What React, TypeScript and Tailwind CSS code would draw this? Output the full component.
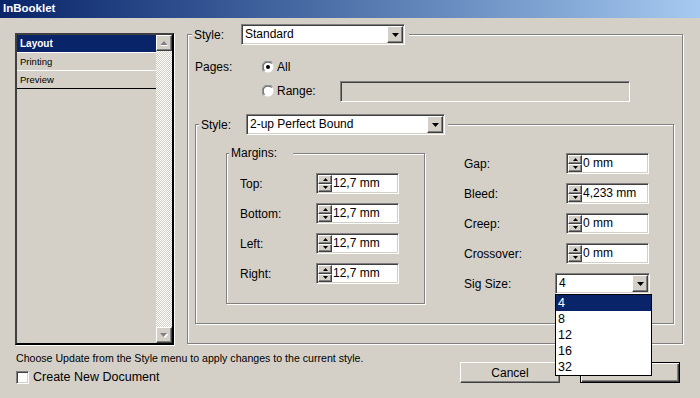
import React from "react";

const raised =
  "border border-t-white border-l-white border-r-[#404040] border-b-[#404040] shadow-[inset_-1px_-1px_0_#808080]";
const sunken =
  "border border-t-[#808080] border-l-[#808080] border-r-white border-b-white shadow-[inset_1px_1px_0_#404040,inset_-1px_-1px_0_#d4d0c8] p-px";
const etched = "border border-[#808080] shadow-[inset_1px_1px_0_#fff,1px_1px_0_#fff]";

function Tri({ up, color = "#000" }: { up?: boolean; color?: string }) {
  return (
    <svg width="5" height="3" viewBox="0 0 5 3">
      <path d={up ? "M2.5 0L5 3H0z" : "M0 0h5L2.5 3z"} fill={color} />
    </svg>
  );
}

function DropBtn() {
  return (
    <div className={`flex w-[16px] items-center justify-center bg-[#d4d0c8] ${raised}`}>
      <svg width="7" height="4" viewBox="0 0 7 4">
        <path d="M0 0h7L3.5 4z" fill="#000" />
      </svg>
    </div>
  );
}

function Select({ value, className }: { value: string; className: string }) {
  return (
    <div className={`flex h-[21px] bg-white ${sunken} ${className}`}>
      <div className="flex-1 pl-[2px] text-[12px] leading-[17px]">{value}</div>
      <DropBtn />
    </div>
  );
}

function Spin({ value }: { value: string }) {
  return (
    <div className={`flex h-[21px] w-[83px] ${sunken}`}>
      <div className="flex w-[14px] flex-col">
        <div className={`flex flex-1 items-center justify-center bg-[#d4d0c8] ${raised}`}>
          <Tri up />
        </div>
        <div className={`flex flex-1 items-center justify-center bg-[#d4d0c8] ${raised}`}>
          <Tri />
        </div>
      </div>
      <div className="flex-1 bg-white pl-px text-[12px] leading-[17px]">{value}</div>
    </div>
  );
}

function Radio({ checked }: { checked?: boolean }) {
  return (
    <svg width="12" height="12" viewBox="0 0 12 12">
      <circle cx="6" cy="6" r="5.5" fill="#fff" />
      <path d="M1.6 10.4A5.5 5.5 0 0 1 10.4 1.6" fill="none" stroke="#808080" />
      <path d="M2.5 9.5A4.5 4.5 0 0 1 9.5 2.5" fill="none" stroke="#404040" />
      {checked && <circle cx="6" cy="6" r="2" fill="#000" />}
    </svg>
  );
}

function ScrollArrow({ up }: { up?: boolean }) {
  return (
    <div className={`flex h-[16px] w-[16px] items-center justify-center bg-[#d4d0c8] ${raised}`}>
      <svg width="8" height="5" viewBox="0 0 8 5">
        <path d={up ? "M4.5 1L8.5 5H0.5z" : "M1 1h8L5 5z"} fill="#fff" />
        <path d={up ? "M4 0L7.5 4H0.5z" : "M0 0h7L3.5 4z"} fill="#808080" />
      </svg>
    </div>
  );
}

function Row({ label, children, labelW }: { label: string; children: React.ReactNode; labelW: string }) {
  return (
    <div className="flex h-[21px] items-center">
      <div className={`${labelW} text-[12px]`}>{label}</div>
      {children}
    </div>
  );
}

export default function App() {
  return (
    <div className="relative h-[398px] w-[700px] overflow-hidden bg-[#d4d0c8] font-['Liberation_Sans',Arial,sans-serif] text-black">
      <div className="h-[18px] bg-linear-to-r from-[#0a246a] to-[#a6caf0] pl-[3px] text-[11.5px] font-bold leading-[17px] text-white">
        InBooklet
      </div>

      <div className="flex items-start pl-[15px] pt-[6px]">
        {/* left list */}
        <div className="mt-[9px] flex h-[312px] w-[159px] border-2 border-t-[#404040] border-l-[#404040] border-r-black border-b-black shadow-[1px_1px_0_#fff]">
          <div className="flex-1">
            <div className="h-[18px] border-b border-white bg-[#0a246a] pl-[3px] text-[10px] font-bold leading-[18px] text-white">
              Layout
            </div>
            <div className="h-[18px] border-b border-white pl-[3px] text-[9.5px] leading-[18px]">Printing</div>
            <div className="h-[18px] border-b border-black pl-[3px] text-[9.5px] leading-[18px]">Preview</div>
          </div>
          <div className="flex w-[16px] flex-col bg-[image:repeating-conic-gradient(#fff_0_25%,#d4d0c8_0_50%)] bg-[length:2px_2px]">
            <ScrollArrow up />
            <div className="flex-1" />
            <ScrollArrow />
          </div>
        </div>

        {/* main group */}
        <fieldset className={`ml-[13px] h-[320px] w-[496px] ${etched}`}>
          <legend className="ml-[4px] flex items-center bg-[#d4d0c8] pl-[2px] pr-[4px]">
            <span className="w-[47px] text-[12px]">Style:</span>
            <Select value="Standard" className="w-[164px]" />
          </legend>
          <div className="pl-[7px] pr-[8px] pt-[10px]">
            <div className="flex h-[24px] items-center text-[12px]">
              <div className="w-[67px]">Pages:</div>
              <Radio checked />
              <span className="ml-[3px]">All</span>
            </div>
            <div className="flex h-[24px] items-center text-[12px]">
              <div className="w-[67px]" />
              <Radio />
              <span className="ml-[3px] w-[63px]">Range:</span>
              <div className={`h-[21px] w-[290px] bg-[#d4d0c8] ${sunken}`} />
            </div>

            <fieldset className={`mt-[11px] h-[210px] ${etched}`}>
              <legend className="ml-[3px] flex items-center bg-[#d4d0c8] pl-[2px] pr-[3px]">
                <span className="w-[45px] text-[12px]">Style:</span>
                <Select value="2-up Perfect Bound" className="w-[199px]" />
              </legend>
              <div className="flex items-start pl-[30px] pt-[11px]">
                <fieldset className={`h-[158px] w-[199px] ${etched}`}>
                  <legend className="ml-[2px] bg-[#d4d0c8] pl-[2px] pr-[16px] text-[12px] leading-[14px]">
                    Margins:
                  </legend>
                  <div className="flex flex-col gap-[9px] pl-[13px] pt-[13px]">
                    <Row label="Top:" labelW="w-[76px]"><Spin value="12,7 mm" /></Row>
                    <Row label="Bottom:" labelW="w-[76px]"><Spin value="12,7 mm" /></Row>
                    <Row label="Left:" labelW="w-[76px]"><Spin value="12,7 mm" /></Row>
                    <Row label="Right:" labelW="w-[76px]"><Spin value="12,7 mm" /></Row>
                  </div>
                </fieldset>

                <div className="ml-[39px] mt-[7px] flex flex-col gap-[9px]">
                  <Row label="Gap:" labelW="w-[102px]"><Spin value="0 mm" /></Row>
                  <Row label="Bleed:" labelW="w-[102px]"><Spin value="4,233 mm" /></Row>
                  <Row label="Creep:" labelW="w-[102px]"><Spin value="0 mm" /></Row>
                  <Row label="Crossover:" labelW="w-[102px]"><Spin value="0 mm" /></Row>
                  <Row label="Sig Size:" labelW="w-[91px]">
                    <div className="relative">
                      <Select value="4" className="w-[95px]" />
                      <div className="absolute left-0 top-full z-10 w-[97px] border border-black bg-white text-[12.5px] leading-[16px]">
                        <div className="bg-[#0a246a] pl-[2px] text-white">4</div>
                        <div className="pl-[2px]">8</div>
                        <div className="pl-[2px]">12</div>
                        <div className="pl-[2px]">16</div>
                        <div className="pl-[2px]">32</div>
                      </div>
                    </div>
                  </Row>
                </div>
              </div>
            </fieldset>
          </div>
        </fieldset>
      </div>

      {/* bottom */}
      <div className="flex justify-between pl-[16px] pr-[20px] pt-[7px]">
        <div>
          <div className="text-[10.6px] leading-[13px]">
            Choose Update from the Style menu to apply changes to the current style.
          </div>
          <div className="mt-[5px] flex h-[14px] items-center">
            <div className={`h-[13px] w-[13px] bg-white ${sunken}`} />
            <span className="ml-[4px] text-[12.5px]">Create New Document</span>
          </div>
        </div>
        <div className="mt-[10px] flex gap-[20px]">
          <button className={`h-[21px] w-[100px] bg-[#d4d0c8] text-[12px] ${raised}`}>Cancel</button>
          <button className="h-[21px] w-[100px] border border-black bg-[#d4d0c8] text-[12px] shadow-[inset_1px_1px_0_#fff,inset_-1px_-1px_0_#404040,inset_-2px_-2px_0_#808080]" />
        </div>
      </div>
    </div>
  );
}
